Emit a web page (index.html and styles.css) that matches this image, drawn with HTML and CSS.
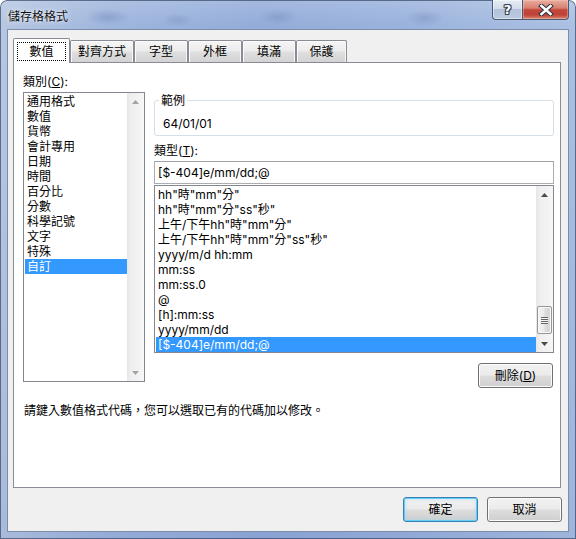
FILE: index.html
```html
<!DOCTYPE html>
<html lang="zh-Hant">
<head>
<meta charset="utf-8">
<title>儲存格格式</title>
<link rel="stylesheet" href="styles.css">
</head>
<body>
<div class="window">
  <div class="titlebar">
    <div class="title">儲存格格式</div>
    <div class="caption-buttons">
      <div class="cap-btn help"><span class="help-glyph">?</span></div>
      <div class="cap-btn close">
        <svg width="16" height="12" viewBox="0 0 16 12">
          <path d="M3.5 2 L12.5 10 M12.5 2 L3.5 10" stroke="#2f3540" stroke-width="4.6" stroke-linecap="square" fill="none"/>
          <path d="M3.5 2 L12.5 10 M12.5 2 L3.5 10" stroke="#ffffff" stroke-width="2.6" stroke-linecap="square" fill="none"/>
        </svg>
      </div>
    </div>
  </div>
  <div class="client">
    <div class="tabs">
      <div class="tab selected t1"><span class="focus">數值</span></div>
      <div class="tab t2">對齊方式</div>
      <div class="tab t3">字型</div>
      <div class="tab t4">外框</div>
      <div class="tab t5">填滿</div>
      <div class="tab t6">保護</div>
    </div>
    <div class="panel">
      <div class="panel-grid">
        <div class="col-left">
          <div class="label">類別(<u>C</u>):</div>
          <div class="listbox cat">
            <div class="items">
              <div class="item">通用格式</div>
              <div class="item">數值</div>
              <div class="item">貨幣</div>
              <div class="item">會計專用</div>
              <div class="item">日期</div>
              <div class="item">時間</div>
              <div class="item">百分比</div>
              <div class="item">分數</div>
              <div class="item">科學記號</div>
              <div class="item">文字</div>
              <div class="item">特殊</div>
              <div class="item sel">自訂</div>
            </div>
            <div class="vscroll disabled">
              <div class="arrow"><svg width="7" height="4" viewBox="0 0 7 4"><path d="M0 4 L3.5 0 L7 4Z"/></svg></div>
              <div class="track"></div>
              <div class="arrow"><svg width="7" height="4" viewBox="0 0 7 4"><path d="M0 0 L3.5 4 L7 0Z"/></svg></div>
            </div>
          </div>
        </div>
        <div class="col-right">
          <fieldset class="sample">
            <legend>範例</legend>
            <div class="sample-value">64/01/01</div>
          </fieldset>
          <div class="label type-label">類型(<u>T</u>):</div>
          <div class="textbox">[$-404]e/mm/dd;@</div>
          <div class="listbox types">
            <div class="items">
              <div class="item">hh"時"mm"分"</div>
              <div class="item">hh"時"mm"分"ss"秒"</div>
              <div class="item">上午/下午hh"時"mm"分"</div>
              <div class="item">上午/下午hh"時"mm"分"ss"秒"</div>
              <div class="item">yyyy/m/d hh:mm</div>
              <div class="item">mm:ss</div>
              <div class="item">mm:ss.0</div>
              <div class="item">@</div>
              <div class="item">[h]:mm:ss</div>
              <div class="item">yyyy/mm/dd</div>
              <div class="item sel">[$-404]e/mm/dd;@</div>
            </div>
            <div class="vscroll">
              <div class="arrow"><svg width="7" height="4" viewBox="0 0 7 4"><path d="M0 4 L3.5 0 L7 4Z"/></svg></div>
              <div class="track">
                <div class="thumb"><div class="grip"></div></div>
              </div>
              <div class="arrow"><svg width="7" height="4" viewBox="0 0 7 4"><path d="M0 0 L3.5 4 L7 0Z"/></svg></div>
            </div>
          </div>
          <div class="btn-row"><button class="btn">刪除(<u>D</u>)</button></div>
        </div>
      </div>
      <div class="desc">請鍵入數值格式代碼，您可以選取已有的代碼加以修改。</div>
    </div>
    <div class="dialog-buttons">
      <button class="btn default">確定</button>
      <button class="btn">取消</button>
    </div>
  </div>
</div>
</body>
</html>
```

FILE: styles.css
```css
* { box-sizing: border-box; }

html, body {
  margin: 0;
  padding: 0;
}

body {
  width: 576px;
  height: 539px;
  overflow: hidden;
  background: #ffffff;
  font-family: Inter, "Noto Sans CJK TC", sans-serif;
  font-size: 12px;
  line-height: 15px;
  color: #000000;
}

u { text-decoration: underline; text-underline-offset: 1px; }

/* ---------- window frame ---------- */
.window {
  width: 576px;
  height: 539px;
  padding: 0 7px 7px 7px;
  display: flex;
  flex-direction: column;
  border-radius: 7px 7px 0 0;
  box-shadow: inset 0 0 0 1px rgba(45, 62, 92, 0.65);
  background:
    radial-gradient(ellipse 32px 12px at 108px 17px, rgba(60, 82, 135, 0.22), transparent 70%),
    radial-gradient(ellipse 22px 10px at 178px 20px, rgba(60, 82, 135, 0.16), transparent 70%),
    radial-gradient(ellipse 28px 12px at 278px 17px, rgba(60, 82, 135, 0.18), transparent 70%),
    radial-gradient(ellipse 28px 12px at 425px 18px, rgba(60, 82, 135, 0.18), transparent 70%),
    linear-gradient(180deg, rgba(255, 255, 255, 0.16), rgba(255, 255, 255, 0) 26px, rgba(50, 80, 160, 0.10) 100%),
    linear-gradient(90deg, #b7c7e2 0%, #9fb6dd 18%, #93acd9 45%, #9ab2dc 70%, #abc0e2 100%);
}

.titlebar {
  height: 29px;
  flex: none;
  display: flex;
  justify-content: space-between;
  align-items: flex-start;
}

.title {
  margin: 8px 0 0 1px;
  font-family: "Noto Sans CJK TC", sans-serif;
  color: #101010;
  text-shadow: 0 0 5px rgba(255, 255, 255, 0.85), 0 0 2px rgba(255, 255, 255, 0.7);
}

.caption-buttons {
  display: flex;
  height: 20px;
}

.cap-btn {
  height: 20px;
  display: flex;
  align-items: center;
  justify-content: center;
  border: 1px solid #4a5b76;
  border-top: none;
}

.help {
  width: 30px;
  border-right: none;
  border-radius: 0 0 0 4px;
  background: linear-gradient(180deg, #e6ecf5 0%, #d2dcea 45%, #b3c3da 50%, #bccbe0 100%);
  box-shadow: inset 0 0 0 1px rgba(255, 255, 255, 0.45);
}

.help-glyph {
  font-family: "DejaVu Sans", sans-serif;
  font-weight: bold;
  font-size: 13px;
  line-height: 13px;
  color: #ffffff;
  text-shadow: 1px 0 0 #3a4252, -1px 0 0 #3a4252, 0 1px 0 #3a4252, 0 -1px 0 #3a4252,
               1px 1px 0 #3a4252, -1px -1px 0 #3a4252, 1px -1px 0 #3a4252, -1px 1px 0 #3a4252;
}

.close {
  width: 47px;
  border-radius: 0 0 4px 0;
  background: linear-gradient(180deg, #e9ad9f 0%, #d88071 42%, #c4463a 52%, #bf4236 78%, #d98a74 100%);
  box-shadow: inset 0 0 0 1px rgba(255, 220, 210, 0.35);
}

.close svg { display: block; }

/* ---------- client area ---------- */
.client {
  flex: 1;
  display: flex;
  flex-direction: column;
  background: #f0f0f0;
  border: 1px solid #7b8da8;
  padding: 8px 6px 0 5px;
}

.tabs {
  display: flex;
  align-items: flex-end;
  height: 24px;
  flex: none;
}

.tab {
  height: 22px;
  display: flex;
  align-items: center;
  justify-content: center;
  border: 1px solid #898c95;
  border-bottom: none;
  border-radius: 2px 2px 0 0;
  background: linear-gradient(180deg, #f5f5f5 0%, #ececec 45%, #dedede 55%, #d3d3d3 100%);
  box-shadow: inset 1px 1px 0 #fbfbfb, inset -1px 0 0 #f6f6f6;
  white-space: nowrap;
}

.tab.selected {
  height: 25px;
  margin-bottom: -1px;
  position: relative;
  z-index: 1;
  align-items: flex-start;
  padding-top: 3px;
  background: #ffffff;
  box-shadow: none;
}

.focus {
  width: 49px;
  height: 19px;
  display: flex;
  align-items: center;
  justify-content: center;
  border: 1px dotted #000000;
}

.t1 { width: 57px; }
.t2 { width: 64px; }
.t3 { width: 54px; }
.t4 { width: 54px; }
.t5 { width: 54px; }
.t6 { width: 51px; }

.panel {
  width: 548px;
  height: 426px;
  flex: none;
  background: #ffffff;
  border: 1px solid #898c95;
  padding: 11px 6px 0 9px;
}

.panel-grid {
  display: grid;
  grid-template-columns: 122px 400px;
  column-gap: 9px;
  align-items: start;
}

.label { white-space: nowrap; }

.col-left {
  display: flex;
  flex-direction: column;
}

.col-right {
  display: flex;
  flex-direction: column;
}

/* list boxes */
.listbox {
  display: flex;
  border: 1px solid #828790;
  background: #ffffff;
}

.cat {
  margin-top: 3px;
  height: 290px;
}

.types {
  margin-top: 1px;
  height: 168px;
}

.items {
  flex: 1;
  min-width: 0;
  padding: 1px 0 0 1px;
}

.item {
  height: 15px;
  line-height: 15px;
  padding-left: 2px;
  white-space: nowrap;
  overflow: hidden;
}

.item.sel {
  background: #3399ff;
  color: #ffffff;
}

.vscroll {
  width: 17px;
  flex: none;
  display: flex;
  flex-direction: column;
  background: linear-gradient(90deg, #e6e6e6 0%, #efefef 25%, #f3f3f3 75%, #f8f8f8 100%);
  color: #4a4a4a;
}

.vscroll.disabled { color: #a3a3a3; }

.arrow {
  height: 17px;
  flex: none;
  display: flex;
  align-items: center;
  justify-content: center;
}

.arrow svg { display: block; fill: currentColor; }

.track {
  flex: 1;
  display: flex;
  flex-direction: column;
  justify-content: flex-end;
  align-items: center;
}

.thumb {
  width: 15px;
  height: 28px;
  margin-bottom: 1px;
  border: 1px solid #959595;
  border-radius: 2px;
  background: linear-gradient(90deg, #f2f2f2 0%, #ebebeb 45%, #dcdcdc 55%, #d4d4d4 100%);
  box-shadow: inset 0 0 0 1px #fafafa;
  display: flex;
  align-items: center;
  justify-content: center;
}

.grip {
  width: 7px;
  height: 7px;
  background: repeating-linear-gradient(180deg, #666666 0 1px, #f4f4f4 1px 2px);
}

/* sample group */
.sample {
  margin: 19px 0 0 0;
  padding: 0 8px 4px 8px;
  border: 1px solid #d5dfe5;
  border-radius: 3px;
  min-width: 0;
}

.sample legend {
  padding: 0 2px;
  margin-left: -4px;
  line-height: 15px;
}

.sample-value {
  margin-top: 8px;
  line-height: 15px;
}

.type-label { margin-top: 7px; }

.textbox {
  margin-top: 3px;
  height: 23px;
  border: 1px solid #abadb3;
  border-top-color: #a0a2a8;
  padding-left: 3px;
  line-height: 21px;
  background: #ffffff;
  white-space: nowrap;
}

.btn-row {
  margin-top: 10px;
  display: flex;
  justify-content: flex-end;
  padding-right: 1px;
}

.desc {
  margin-top: 15px;
  padding-left: 1px;
  white-space: nowrap;
}

/* buttons */
.btn {
  width: 75px;
  height: 25px;
  padding: 0;
  border: 1px solid #707070;
  border-radius: 3px;
  background: linear-gradient(180deg, #f2f2f2 0%, #ebebeb 48%, #dddddd 52%, #cfcfcf 100%);
  box-shadow: inset 0 0 0 1px #fcfcfc;
  font-family: Inter, "Noto Sans CJK TC", sans-serif;
  font-size: 12px;
  line-height: 15px;
  color: #000000;
}

.btn.default {
  border-color: #3c7fb1;
  box-shadow: inset 0 0 0 1px #62cdf5, inset 0 0 3px 2px rgba(140, 215, 245, 0.35);
}

.dialog-buttons {
  margin-top: 9px;
  display: flex;
  justify-content: flex-end;
  gap: 9px;
}
```
